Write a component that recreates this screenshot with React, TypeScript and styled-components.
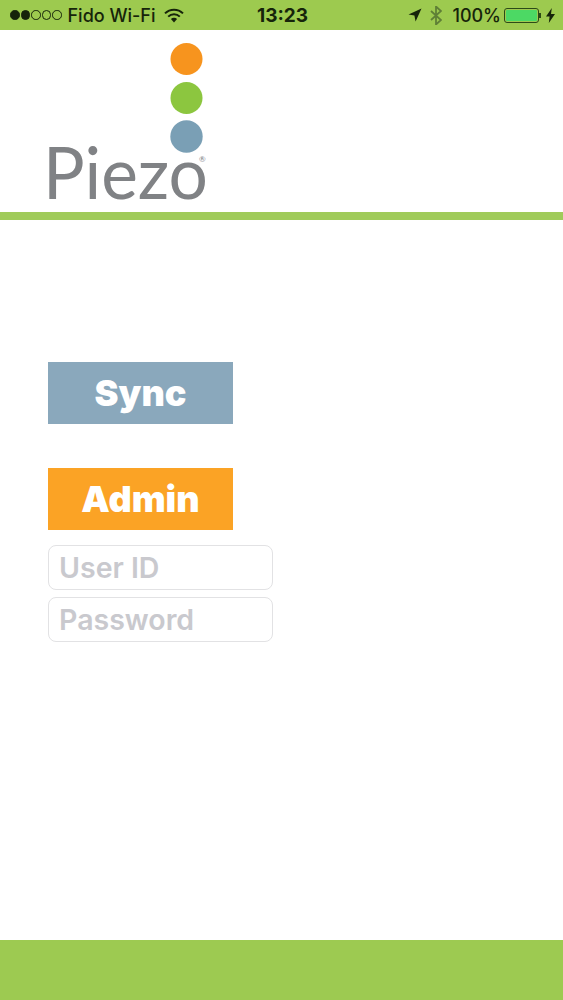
import React from 'react'
import styled, { createGlobalStyle } from 'styled-components'

const GlobalStyle = createGlobalStyle`
    html, body, #root {
        margin: 0;
        padding: 0;
        height: 100%;
    }
    body {
        background: #ffffff;
        font-family: Inter, 'Liberation Sans', sans-serif;
    }
`

const App: React.FC = () => {
    return (
        <Page>
            <GlobalStyle />
            <StatusBar>
                <StatusLeft>
                    <Signal>
                        {[true, true, false, false, false].map((filled, index) => (
                            <SignalDot key={index} filled={filled} />
                        ))}
                    </Signal>
                    <Carrier>Fido Wi-Fi</Carrier>
                    <svg width="20" height="15" viewBox="0 0 20 15">
                        <g fill="none" stroke="#16240a" strokeWidth="2">
                            <path d="M1 5.4a12.8 12.8 0 0 1 18 0" />
                            <path d="M4.2 8.6a8.2 8.2 0 0 1 11.6 0" />
                        </g>
                        <path d="M6.9 11a4.4 4.4 0 0 1 6.2 0L10 14.4z" fill="#16240a" />
                    </svg>
                </StatusLeft>
                <Clock>13:23</Clock>
                <StatusRight>
                    <svg width="14" height="14" viewBox="0 0 14 14">
                        <path d="M13.5.5 7.6 13.5 6.4 7.6.5 6.6z" fill="#16240a" />
                    </svg>
                    <BluetoothIcon width="12" height="19" viewBox="0 0 12 19">
                        <path
                            d="M1 5l10 9-5 4.500V.5l5 4.500L1 14"
                            fill="none"
                            stroke="#5f7f36"
                            strokeWidth="1.800"
                        />
                    </BluetoothIcon>
                    <Percent>100%</Percent>
                    <Battery>
                        <BatteryFill />
                    </Battery>
                    <BatteryCap />
                    <svg width="9" height="15" viewBox="0 0 9 15">
                        <path d="M5.800 0 0 8.500h3.600L2.800 15 9 6H5z" fill="#16240a" />
                    </svg>
                </StatusRight>
            </StatusBar>
            <Header>
                <svg width="175" height="172" viewBox="0 0 175 172">
                    <circle cx="143.500" cy="17" r="16" fill="#f7941e" />
                    <circle cx="143.500" cy="56" r="16" fill="#8cc63f" />
                    <circle cx="143.500" cy="94.500" r="16.200" fill="#7a9fb5" />
                    <text
                        x="0"
                        y="157"
                        fontFamily="Lato, 'Open Sans', sans-serif"
                        fontSize="72"
                        fontWeight="400"
                        fill="#808285"
                        textLength="165"
                        lengthAdjust="spacingAndGlyphs"
                    >
                        Piezo
                    </text>
                    <text x="156" y="120" fontFamily="Lato, sans-serif" fontSize="8" fill="#808285">
                        ®
                    </text>
                </svg>
            </Header>
            <Divider />
            <Content>
                <ActionButton color="#8aa8bc">Sync</ActionButton>
                <AdminButton color="#fba325">Admin</AdminButton>
                <Credentials>
                    <Field placeholder="User ID" />
                    <Field placeholder="Password" />
                </Credentials>
            </Content>
            <Footer />
        </Page>
    )
}

export default App

const Page = styled.div`
    display: flex;
    flex-direction: column;
    width: 563px;
    height: 1000px;
    overflow: hidden;
    background: #ffffff;
`

const StatusBar = styled.div`
    display: grid;
    grid-template-columns: 1fr auto 1fr;
    align-items: center;
    height: 30px;
    padding: 0 8px 0 10px;
    background: #9dca4f;
    color: #16240a;
`

const StatusLeft = styled.div`
    display: flex;
    align-items: center;
`

const Signal = styled.div`
    display: flex;
    gap: 1px;
    margin-right: 6px;
`

const SignalDot = styled.span<{ filled: boolean }>`
    box-sizing: border-box;
    width: 9.500px;
    height: 9.500px;
    border-radius: 50%;
    border: 1px solid #16240a;
    background: ${(props) => (props.filled ? '#16240a' : 'transparent')};
`

const Carrier = styled.span`
    margin-right: 8px;
    font-weight: 500;
    font-size: 18px;
`

const Clock = styled.span`
    font-weight: 700;
    font-size: 19px;
`

const StatusRight = styled.div`
    display: flex;
    align-items: center;
    justify-content: flex-end;
`

const BluetoothIcon = styled.svg`
    margin-left: 8px;
`

const Percent = styled.span`
    margin: 0 3px 0 10px;
    font-weight: 500;
    font-size: 18px;
`

const Battery = styled.div`
    box-sizing: border-box;
    width: 35px;
    height: 15px;
    padding: 1px;
    border: 1px solid #2c4a18;
    border-radius: 3px;
`

const BatteryFill = styled.div`
    height: 100%;
    border-radius: 1px;
    background: #4cd964;
`

const BatteryCap = styled.div`
    width: 2px;
    height: 5px;
    margin-right: 5px;
    background: #2c4a18;
`

const Header = styled.div`
    display: flex;
    align-items: flex-start;
    height: 182px;
    padding: 12px 0 0 43px;
    box-sizing: border-box;
`

const Divider = styled.div`
    height: 8px;
    background: #a0cb5a;
`

const Content = styled.div`
    flex: 1;
    display: flex;
    flex-direction: column;
    align-items: flex-start;
    padding: 142px 0 0 48px;
`

const ActionButton = styled.button<{ color: string }>`
    width: 185px;
    height: 62px;
    padding: 0;
    border: none;
    background: ${(props) => props.color};
    color: #ffffff;
    font-family: Inter, 'Liberation Sans', sans-serif;
    font-size: 36px;
    font-weight: 900;
`

const AdminButton = styled(ActionButton)`
    margin-top: 44px;
`

const Credentials = styled.div`
    display: flex;
    flex-direction: column;
    gap: 7px;
    margin-top: 15px;
`

const Field = styled.input`
    box-sizing: border-box;
    width: 225px;
    height: 45px;
    padding: 0 10px;
    border: 1.500px solid #e2e2e4;
    border-radius: 8px;
    background: #ffffff;
    font-family: Inter, 'Liberation Sans', sans-serif;
    font-size: 28.500px;
    font-weight: 600;
    outline: none;

    &::placeholder {
        color: #c9c9ce;
        opacity: 1;
    }
`

const Footer = styled.div`
    height: 60px;
    background: #9dca51;
`
